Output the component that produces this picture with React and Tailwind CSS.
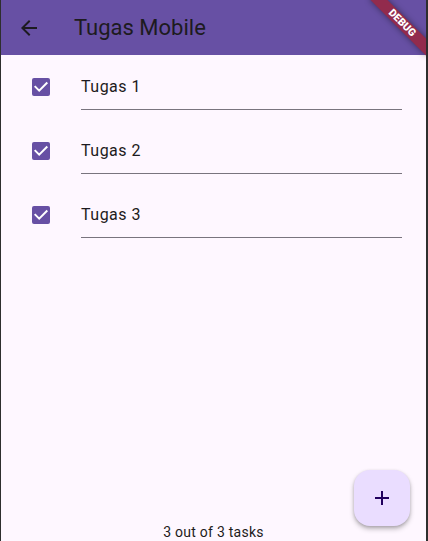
import { useState } from "react";

const initialTasks = [
  { id: 1, title: "Tugas 1", done: true },
  { id: 2, title: "Tugas 2", done: true },
  { id: 3, title: "Tugas 3", done: true },
];

function CheckBox({ checked, onChange }) {
  return (
    <button
      type="button"
      onClick={onChange}
      className={`mt-[23px] flex h-[18px] w-[18px] shrink-0 items-center justify-center rounded-[2px] ${
        checked ? "bg-[#6750a4]" : "border-2 border-[#49454f]"
      }`}
    >
      {checked && (
        <svg width="18" height="18" viewBox="0 0 18 18">
          <path
            d="M2.7 8.1 L7.2 12.6 L15.3 4.5"
            fill="none"
            stroke="#ffffff"
            strokeWidth="2"
          />
        </svg>
      )}
    </button>
  );
}

function TaskRow({ task, onToggle }) {
  return (
    <div className="flex h-16 items-start pl-[31px]">
      <CheckBox checked={task.done} onChange={onToggle} />
      <div className="ml-[31px] box-border h-[55px] w-[321px] border-b border-[#79747e] pt-[20px]">
        <div className="text-[16px] leading-[24px] tracking-[0.5px] text-[#1d1b20]">
          {task.title}
        </div>
      </div>
    </div>
  );
}

export default function App() {
  const [tasks, setTasks] = useState(initialTasks);
  const doneCount = tasks.filter((t) => t.done).length;

  const toggle = (id) =>
    setTasks(tasks.map((t) => (t.id === id ? { ...t, done: !t.done } : t)));

  return (
    <div
      className="relative flex h-[541px] w-full flex-col overflow-hidden border-l border-r-2 border-[#2e2e2e] bg-[#fef7ff]"
      style={{ fontFamily: "Roboto, 'Noto Sans', sans-serif" }}
    >
      {/* app bar */}
      <div className="flex h-[55px] shrink-0 items-center bg-[#6750a4]">
        <div className="ml-[16px] flex h-6 w-6 items-center justify-center">
          <svg width="24" height="24" viewBox="0 0 24 24" fill="#1d1b20">
            <path d="M20 11H7.83l5.59-5.59L12 4l-8 8 8 8 1.41-1.41L7.83 13H20v-2z" />
          </svg>
        </div>
        <div className="ml-[33px] text-[22px] leading-[28px] text-[#1d1b20]">
          Tugas Mobile
        </div>
      </div>

      {/* list */}
      <div className="flex flex-col">
        {tasks.map((task) => (
          <TaskRow key={task.id} task={task} onToggle={() => toggle(task.id)} />
        ))}
      </div>

      <div className="flex-1" />

      <div className="h-[18px] text-center text-[14px] leading-[18px] tracking-[0.25px] text-[#1d1b20]">
        {doneCount} out of {tasks.length} tasks
      </div>

      {/* fab */}
      <button
        type="button"
        className="absolute bottom-[15px] right-[16px] flex h-14 w-14 items-center justify-center rounded-2xl bg-[#eaddff] shadow-[0_3px_5px_rgba(0,0,0,0.25),0_1px_3px_rgba(0,0,0,0.15)]"
      >
        <svg width="24" height="24" viewBox="0 0 24 24" fill="#21005d">
          <path d="M19 13h-6v6h-2v-6H5v-2h6V5h2v6h6v2z" />
        </svg>
      </button>

      {/* debug banner */}
      <div className="pointer-events-none absolute left-[361px] top-[17px] flex h-[12px] w-[80px] rotate-45 items-center justify-center bg-[#922b4d] shadow-[0_0_6px_rgba(0,0,0,0.45)]">
        <span className="text-[10.5px] font-black leading-none text-white">DEBUG</span>
      </div>
    </div>
  );
}
